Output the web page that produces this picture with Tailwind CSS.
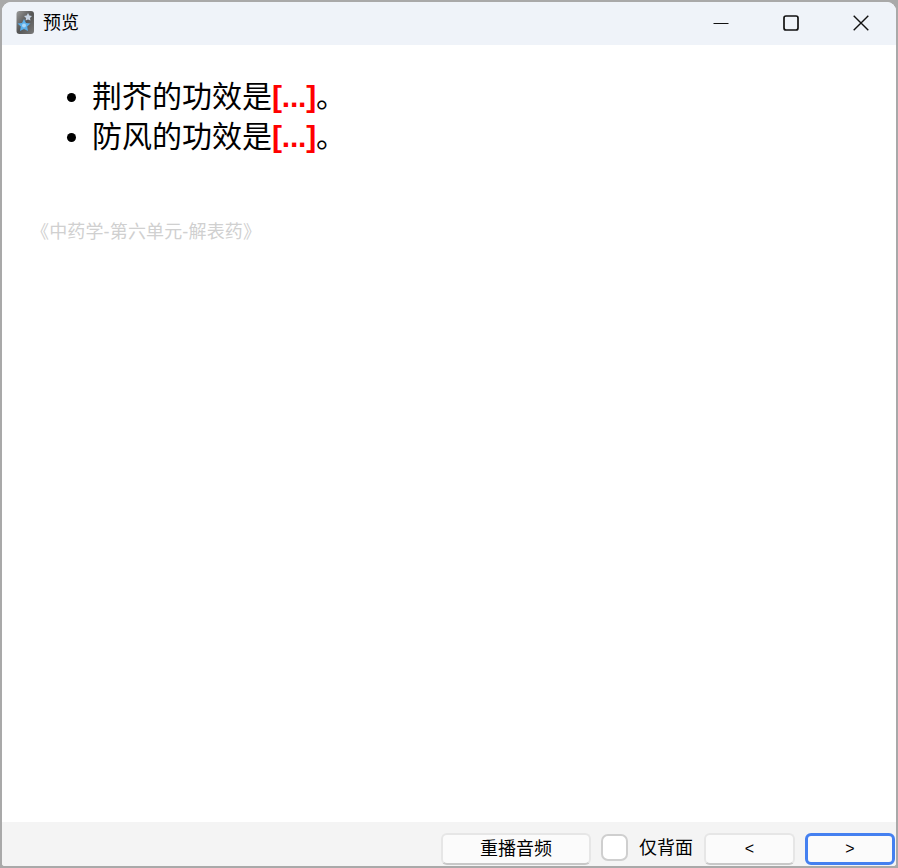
<!DOCTYPE html>
<html lang="zh-CN">
<head>
    <meta charset="UTF-8">
    <title>预览</title>
    <script src="https://cdn.jsdelivr.net/npm/@tailwindcss/browser@4"></script>
</head>
<body class="bg-[#a9a9a9] h-[868px] w-[898px] overflow-hidden font-['Liberation_Sans','Noto_Sans_CJK_SC',sans-serif]">
    <div class="h-[868px] pt-[2px] px-[2px] pb-[2px]">
        <div class="h-full flex flex-col bg-white rounded-t-[9px] rounded-b-[3px] overflow-hidden">
            <!-- title bar -->
            <div class="h-[43px] shrink-0 bg-[#eff3f9] flex items-center pl-[14px] pb-[2px]">
                <svg width="19" height="23" viewBox="0 0 19 23" class="shrink-0">
                    <defs>
                        <linearGradient id="ico" x1="0" y1="0" x2="1" y2="1">
                            <stop offset="0" stop-color="#9a9a9a"/>
                            <stop offset="0.5" stop-color="#555555"/>
                            <stop offset="1" stop-color="#7a7a7a"/>
                        </linearGradient>
                    </defs>
                    <rect x="0.5" y="0" width="17.5" height="23" rx="3" fill="url(#ico)"/>
                    <polygon points="12,2 13.3,4.6 16,5 14,7 14.5,9.6 12,8.4 9.6,9.6 10,7 8,5 10.7,4.6" fill="#c5d2e2"/>
                    <polygon points="8,8 10,12 14.5,12.6 11.2,15.6 12,20 8,17.9 4,20 4.8,15.6 1.5,12.6 6,12" fill="#5aaeea"/>
                    <circle cx="8" cy="14.5" r="2" fill="#a9d6f5"/>
                </svg>
                <span class="ml-[8px] text-[18px] leading-none text-black">预览</span>
                <div class="ml-auto flex items-center h-full">
                    <button class="w-[70px] h-full flex items-center justify-center">
                        <svg width="16" height="16" viewBox="0 0 16 16"><path d="M0.5 8.5H15.5" stroke="#111111" stroke-width="1"/></svg>
                    </button>
                    <button class="w-[70px] h-full flex items-center justify-center">
                        <svg width="16" height="16" viewBox="0 0 16 16"><rect x="1" y="1" width="14" height="14" rx="2" fill="none" stroke="#111111" stroke-width="1.7"/></svg>
                    </button>
                    <button class="w-[70px] h-full flex items-center justify-center">
                        <svg width="16" height="16" viewBox="0 0 16 16"><path d="M0.7 0.7L15.3 15.3M15.3 0.7L0.7 15.3" stroke="#111111" stroke-width="1.4"/></svg>
                    </button>
                </div>
            </div>
            <!-- card -->
            <div class="flex-1 bg-white pt-[32px] pl-[35px]">
                <ul class="list-disc pl-[55px] text-[30px] leading-[40px] text-black">
                    <li>荆芥的功效是<span class="font-bold text-[#ff0000] tracking-[-0.2px]">[...]</span>。</li>
                    <li>防风的功效是<span class="font-bold text-[#ff0000] tracking-[-0.2px]">[...]</span>。</li>
                </ul>
                <div class="mt-[63px] -ml-[6px] text-[18px] leading-[24px] tracking-[0.15px] text-[#d0d0d0]">《中药学-第六单元-解表药》</div>
            </div>
            <!-- bottom bar -->
            <div class="h-[44px] shrink-0 bg-[#f4f4f4] flex items-start justify-end pt-[11px] pr-[1px]">
                <button class="w-[150px] h-[32px] bg-[#fbfbfb] border-2 border-[#e6e6e6] border-b-[#c8c8c8] rounded-[6px] text-[18px] leading-none text-black">重播音频</button>
                <span class="ml-[10px] w-[27px] h-[27px] mt-[1px] bg-white border-2 border-[#cfcfcf] rounded-[7px]"></span>
                <span class="ml-[11px] text-[18px] leading-[30px] text-black">仅背面</span>
                <button class="ml-[11px] w-[91px] h-[32px] bg-[#fbfbfb] border-2 border-[#e6e6e6] border-b-[#c8c8c8] rounded-[6px] text-[16px] leading-none text-black">&lt;</button>
                <button class="ml-[10px] w-[90px] h-[32px] bg-[#fbfbfb] border-[3px] border-[#4480f0] rounded-[6px] text-[16px] leading-none text-black">&gt;</button>
            </div>
        </div>
    </div>
</body>
</html>
